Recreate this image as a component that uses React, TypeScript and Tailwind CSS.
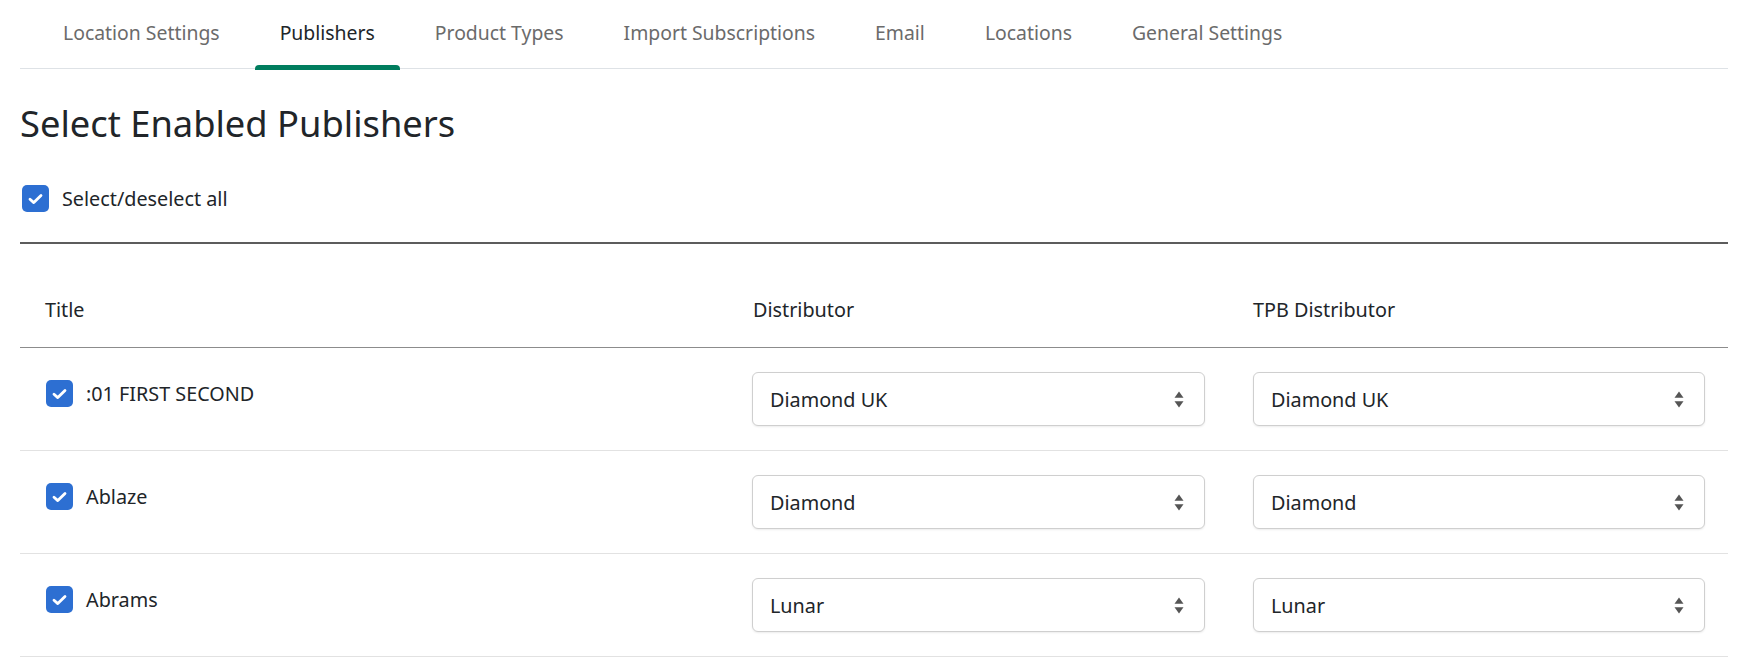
import React from "react";

const tabs = [
  "Location Settings",
  "Publishers",
  "Product Types",
  "Import Subscriptions",
  "Email",
  "Locations",
  "General Settings",
];

const rows = [
  { title: ":01 FIRST SECOND", d: "Diamond UK", t: "Diamond UK" },
  { title: "Ablaze", d: "Diamond", t: "Diamond" },
  { title: "Abrams", d: "Lunar", t: "Lunar" },
];

function Check() {
  return (
    <span className="flex h-[27px] w-[27px] shrink-0 items-center justify-center rounded-[5px] bg-[#2d6fd2]">
      <svg width="15" height="12" viewBox="0 0 15 12" fill="none">
        <path d="M2 6.2 L5.8 9.6 L13 2.4" stroke="white" strokeWidth="2.8" strokeLinecap="round" strokeLinejoin="round" />
      </svg>
    </span>
  );
}

function Select({ value }: { value: string }) {
  return (
    <div className="flex h-[54px] w-full items-center justify-between rounded-[6px] border border-[#cfcfcf] bg-white pl-[17px] pr-[20px] shadow-[0_1px_2px_rgba(0,0,0,0.08)]">
      <span className="text-[19.8px] leading-[27px] text-[#212529]">{value}</span>
      <svg width="10" height="17" viewBox="0 0 10 17">
        <path d="M5 0.5 L9.5 6.8 L0.5 6.8 Z" fill="#555555" />
        <path d="M5 16.5 L9.5 10.2 L0.5 10.2 Z" fill="#555555" />
      </svg>
    </div>
  );
}

export default function App() {
  return (
    <div className="min-h-screen bg-white pl-5 pr-7 font-['Segoe_UI','Noto_Sans',sans-serif] text-[#212529]">
      <nav className="flex h-[69px] gap-[10px] border-b border-[#dee2e6] pl-[18px]">
        {tabs.map((t, i) => (
          <div
            key={t}
            className={
              "relative px-[25px] pt-[19px] text-[19.4px] leading-[27px] " +
              (i === 1 ? "text-[#212529]" : "text-[#6b6b6b]")
            }
          >
            {t}
            {i === 1 && (
              <span className="absolute bottom-[-2px] left-0 right-0 h-[5px] rounded-t-[4px] bg-[#007d5e]" />
            )}
          </div>
        ))}
      </nav>

      <h2 className="mt-[33px] text-[36.3px] leading-[43px] font-normal">Select Enabled Publishers</h2>

      <div className="mt-[40px] flex items-center gap-[13px] pl-[2px]">
        <Check />
        <span className="text-[19.8px] leading-[27px]">Select/deselect all</span>
      </div>

      <div className="mt-[30px] h-[2px] bg-[#5c5c5c]" />

      <div className="mt-[28px]">
        <div className="grid grid-cols-[708px_501px_1fr] border-b border-[#8c8c8c] text-[19.8px] leading-[27px]">
          <div className="px-[25px] pb-[24px] pt-[24px]">Title</div>
          <div className="px-[25px] pb-[24px] pt-[24px]">Distributor</div>
          <div className="px-[24px] pb-[24px] pt-[24px]">TPB Distributor</div>
        </div>
        {rows.map((r) => (
          <div key={r.title} className="grid grid-cols-[708px_501px_1fr] border-b border-[#e2e2e2] text-[19.8px] leading-[27px]">
            <div className="flex items-start gap-[13px] pl-[26px] pt-[32px]">
              <Check />
              <span>{r.title}</span>
            </div>
            <div className="px-[24px] py-[24px]">
              <Select value={r.d} />
            </div>
            <div className="pl-[24px] pr-[23px] py-[24px]">
              <Select value={r.t} />
            </div>
          </div>
        ))}
      </div>
    </div>
  );
}
